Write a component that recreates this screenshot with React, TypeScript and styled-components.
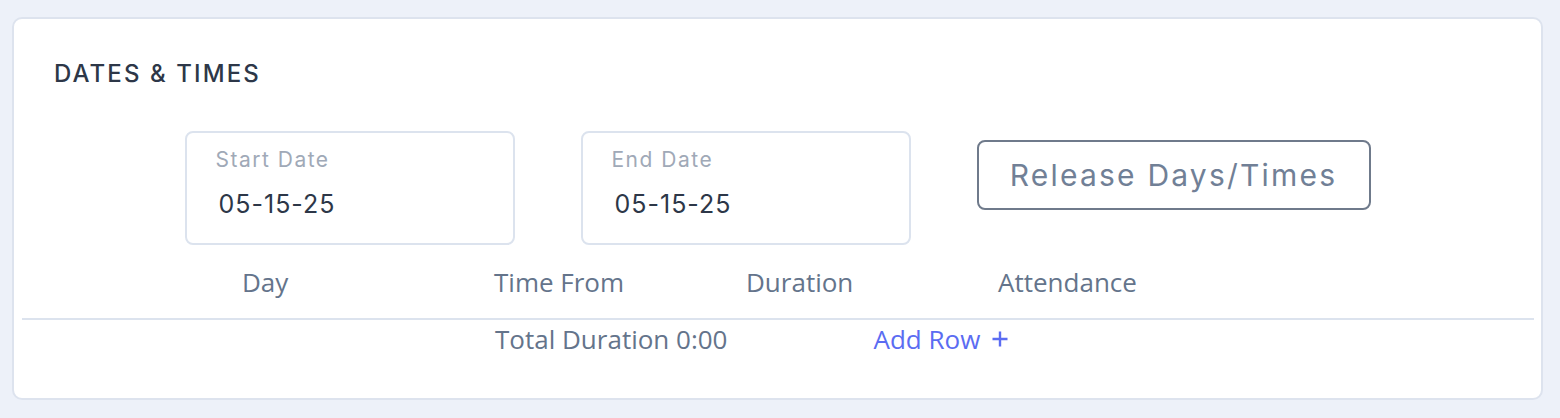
import styled, { createGlobalStyle } from 'styled-components'

const GlobalStyles = createGlobalStyle`
  html, body {
    margin: 0;
    padding: 0;
    background: #edf1f9;
  }
  * {
    box-sizing: border-box;
  }
`

const Page = styled.div`
  padding: 17px 17px 18px 12px;
  background: #edf1f9;
  min-height: 418px;
`

const Card = styled.section`
  height: 383px;
  background: #ffffff;
  border: 2px solid #dde3ee;
  border-radius: 10px;
  display: flex;
  flex-direction: column;
`

const Title = styled.h2`
  margin: 0;
  padding: 40px 40px 0;
  font-family: Inter, 'Noto Sans', sans-serif;
  font-size: 24px;
  line-height: 29px;
  font-weight: 500;
  letter-spacing: 2.1px;
  color: #2d3748;
`

const DateRow = styled.div`
  display: flex;
  justify-content: center;
  align-items: flex-start;
  gap: 66px;
  margin-top: 43px;
`

const DateBox = styled.div`
  width: 330px;
  height: 114px;
  border: 2px solid #dce3ee;
  border-radius: 8px;
  padding: 14px 0 0 29px;
  display: flex;
  flex-direction: column;
  gap: 17px;
`

const DateLabel = styled.span`
  font-family: Inter, 'Noto Sans', sans-serif;
  font-size: 21px;
  line-height: 25px;
  letter-spacing: 1.5px;
  color: #a0a9b7;
`

const DateValue = styled.span`
  font-family: Inter, 'Noto Sans', sans-serif;
  font-size: 25px;
  line-height: 30px;
  letter-spacing: 1px;
  color: #2d3748;
  padding-left: 3px;
`

const ReleaseButton = styled.button`
  margin-top: 9px;
  width: 394px;
  height: 70px;
  padding: 0;
  background: #ffffff;
  border: 2px solid #6f7a8b;
  border-radius: 8px;
  font-family: Inter, 'Noto Sans', sans-serif;
  font-size: 30px;
  font-weight: 400;
  letter-spacing: 2.2px;
  color: #718096;
  cursor: pointer;
`

const Table = styled.div`
  margin: 20px 7px 0 8px;
  font-family: 'Open Sans', 'Noto Sans', sans-serif;
  font-size: 26px;
  line-height: 34px;
  color: #64748b;
`

const HeaderRow = styled.div`
  display: grid;
  grid-template-columns: repeat(4, 252px);
  padding: 0 0 19px 220px;
  border-bottom: 2px solid #dce3ee;
`

const HeaderCell = styled.div``

const FooterRow = styled.div`
  display: flex;
  align-items: center;
  padding: 2px 0 0 473px;
  gap: 146px;
`

const AddRow = styled.button`
  display: flex;
  align-items: center;
  gap: 12px;
  background: none;
  border: none;
  padding: 0;
  font: inherit;
  color: #5b6cf2;
  cursor: pointer;
`

const PlusIcon = () => (
  <svg width="16" height="16" viewBox="0 0 16 16" fill="none" stroke="currentColor" strokeWidth="2.4">
    <path d="M8 0.5v15M0.5 8h15" />
  </svg>
)

const columns = ['Day', 'Time From', 'Duration', 'Attendance']

const App = () => {
  return (
    <>
      <GlobalStyles />
      <Page>
        <Card>
          <Title>DATES &amp; TIMES</Title>
          <DateRow>
            <DateBox>
              <DateLabel>Start Date</DateLabel>
              <DateValue>05-15-25</DateValue>
            </DateBox>
            <DateBox>
              <DateLabel>End Date</DateLabel>
              <DateValue>05-15-25</DateValue>
            </DateBox>
            <ReleaseButton>Release Days/Times</ReleaseButton>
          </DateRow>
          <Table>
            <HeaderRow>
              {columns.map((col) => (
                <HeaderCell key={col}>{col}</HeaderCell>
              ))}
            </HeaderRow>
            <FooterRow>
              <span>Total Duration 0:00</span>
              <AddRow>
                Add Row
                <PlusIcon />
              </AddRow>
            </FooterRow>
          </Table>
        </Card>
      </Page>
    </>
  )
}

export default App
